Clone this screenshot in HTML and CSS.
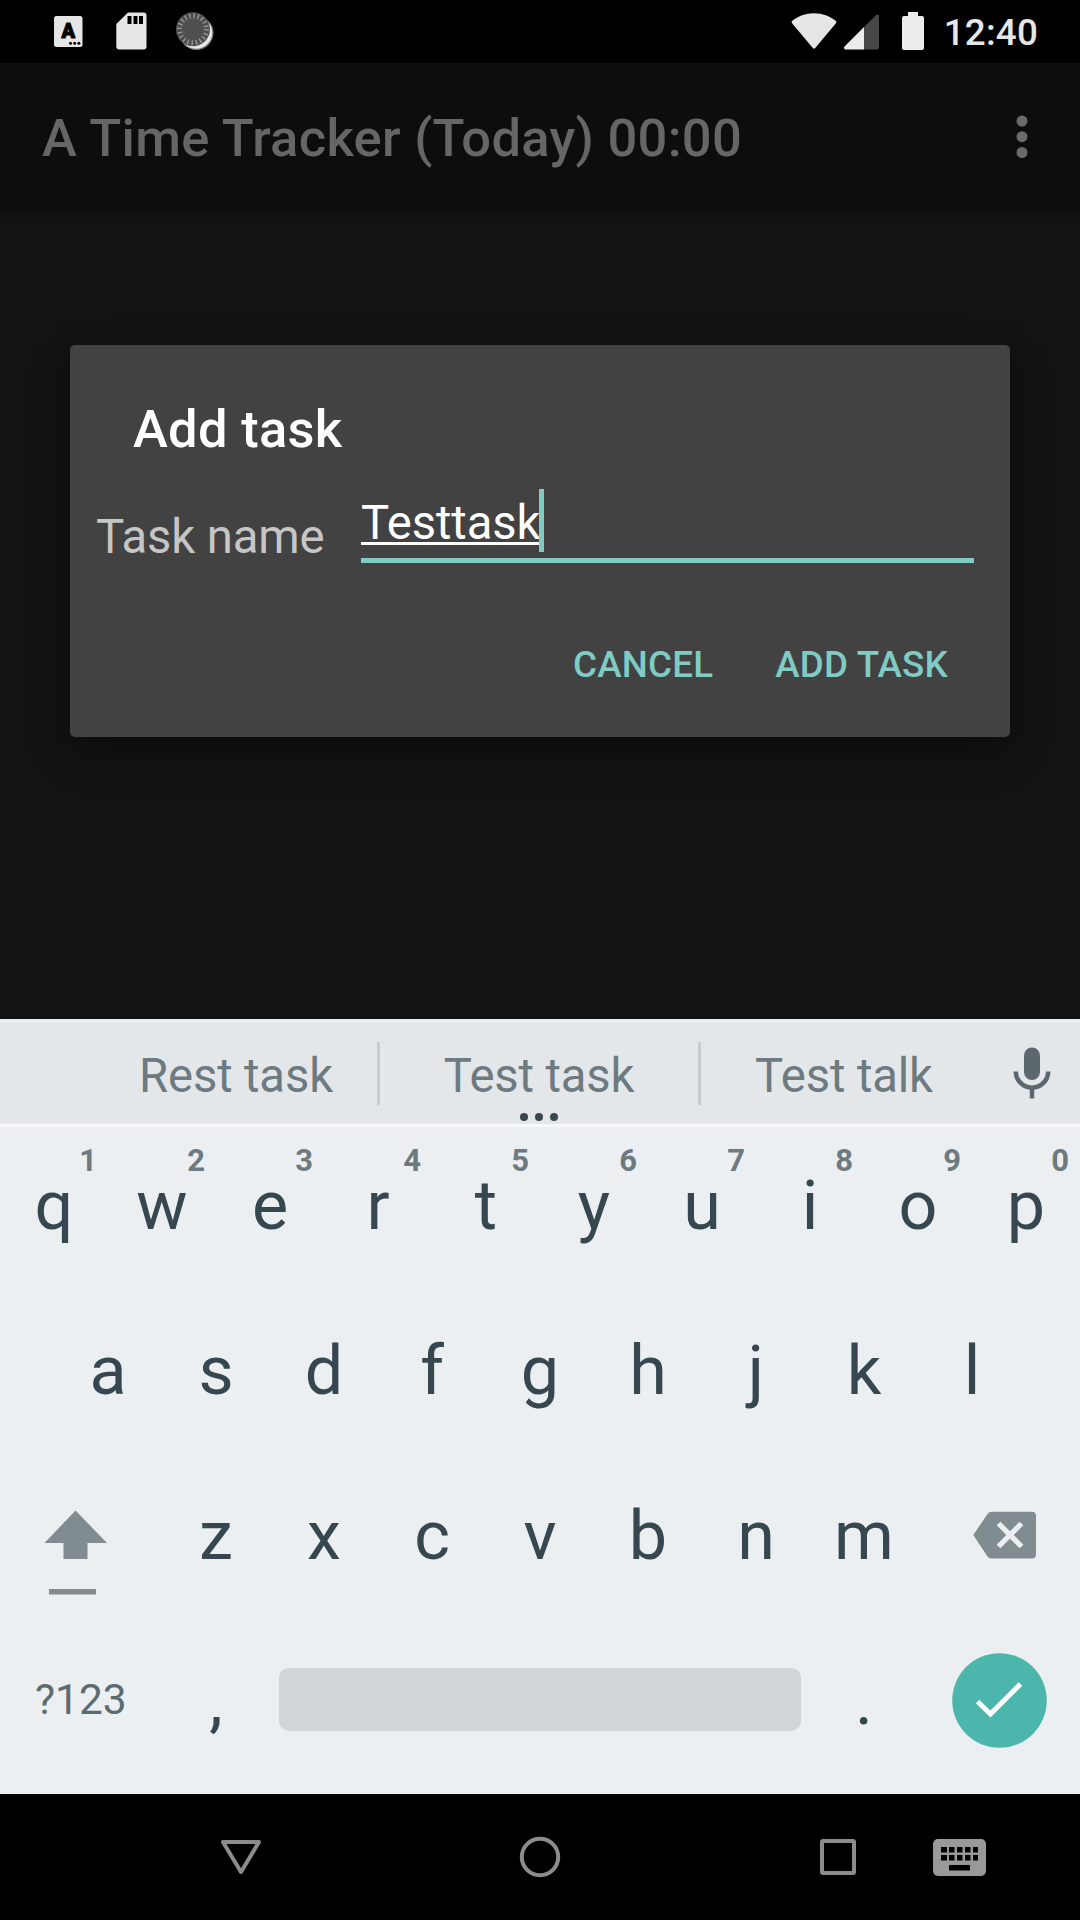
FILE: index.html
```html
<!DOCTYPE html>
<html lang="en">
<head>
<meta charset="utf-8">
<title>A Time Tracker</title>
<link rel="stylesheet" href="styles.css">
</head>
<body>
<div class="phone">
  <header class="status">
    <svg class="st-lang" width="29" height="31" viewBox="0 0 29 31"><rect width="28.5" height="31" rx="2.5" fill="#e6e6e6"/><text class="lang-letter" x="14.2" y="22" text-anchor="middle">A</text><g fill="#000"><circle cx="16.5" cy="27.3" r="1.5"/><circle cx="20.7" cy="27.3" r="1.5"/><circle cx="24.9" cy="27.3" r="1.5"/></g></svg>
    <svg class="st-sd" width="31" height="38" viewBox="0 0 31 38"><path fill="#e6e6e6" d="M12 0.5H27.5a3 3 0 0 1 3 3V34.500a3 3 0 0 1-3 3H3.300a3 3 0 0 1-3-3V12Z"/><path d="M11.500 4h4v8h-4zM17.500 4h4v8h-4zM23 4h4v8h-4z"/></svg>
    <svg class="st-sync" width="38" height="38" viewBox="0 0 38 38"><circle cx="20.500" cy="21" r="17" fill="#777"/><circle cx="20" cy="20.500" r="16.200" fill="#e8e8e8"/><circle cx="17" cy="17.300" r="17" fill="#4f4f4f"/><circle cx="17" cy="17.300" r="13.500" fill="none" stroke="#999" stroke-width="5" stroke-dasharray="1.300 2.941"/></svg>
    <span class="grow"></span>
    <svg class="st-wifi" width="46" height="37" viewBox="0 0 46 37"><path fill="#e6e6e6" d="M.5 8.500C13-2.500 33-2.500 45.500 8.500Q45 10.500 43.500 12L24.200 35Q23 36.500 21.800 35L2.500 12Q1 10.500 .5 8.500Z"/></svg>
    <svg class="st-cell" width="35" height="36" viewBox="0 0 35 36"><path fill="#474747" d="M20 13 32 1.300Q33 0 35 1V33a2.500 2.500 0 0 1-2.500 2.500H20z"/><path fill="#ececec" d="M20 13V35.500H1.500Q-1 34.500 .5 32.500Z"/></svg>
    <svg class="st-bat" width="22" height="38" viewBox="0 0 22 38"><path fill="#ececec" d="M6 0h10v4h4a2 2 0 0 1 2 2v30a2 2 0 0 1-2 2H2a2 2 0 0 1-2-2V6a2 2 0 0 1 2-2h4z"/></svg>
    <span class="clock">12:40</span>
  </header>

  <div class="appbar">
    <h1>A Time Tracker (Today) 00:00</h1>
    <svg class="more" width="12" height="44" viewBox="0 0 12 44"><g fill="#6b6b6b"><circle cx="6" cy="6" r="5.500"/><circle cx="6" cy="21.700" r="5.500"/><circle cx="6" cy="37.500" r="5.500"/></g></svg>
  </div>

  <main class="content">
    <section class="dialog">
      <h2>Add task</h2>
      <div class="form">
        <span class="label">Task name</span>
        <div class="field"><span class="value">Testtask</span><span class="caret"></span></div>
      </div>
      <div class="actions"><span>CANCEL</span><span>ADD TASK</span></div>
    </section>
  </main>

  <section class="keyboard">
    <div class="suggest">
      <span class="word">Rest task</span>
      <span class="word mid">Test task<i class="dots"><b></b><b></b><b></b></i></span>
      <span class="word">Test talk</span>
      <svg class="mic" width="38" height="52" viewBox="0 0 38 52"><rect x="11" y=".5" width="16" height="32.500" rx="8" fill="#5c686e"/><path fill="none" stroke="#5c686e" stroke-width="4.500" d="M2.800 24.500a16.200 16.200 0 0 0 32.400 0M19 40.500V51.500"/></svg>
    </div>
    <div class="row">
      <span class="key">q<sup>1</sup></span><span class="key">w<sup>2</sup></span><span class="key">e<sup>3</sup></span><span class="key">r<sup>4</sup></span><span class="key">t<sup>5</sup></span><span class="key">y<sup>6</sup></span><span class="key">u<sup>7</sup></span><span class="key">i<sup>8</sup></span><span class="key">o<sup>9</sup></span><span class="key">p<sup>0</sup></span>
    </div>
    <div class="row">
      <span class="key">a</span><span class="key">s</span><span class="key">d</span><span class="key">f</span><span class="key">g</span><span class="key">h</span><span class="key">j</span><span class="key">k</span><span class="key">l</span>
    </div>
    <div class="row">
      <span class="wide shift"><svg width="64" height="86" viewBox="0 0 64 86"><path fill="#818c90" d="M31.500 .5 63 33H43.500V49H19.500V33H.5ZM5 79h47v5.500H5z"/></svg></span>
      <span class="key">z</span><span class="key">x</span><span class="key">c</span><span class="key">v</span><span class="key">b</span><span class="key">n</span><span class="key">m</span>
      <span class="wide back"><svg width="64" height="48" viewBox="0 0 64 48"><path fill="#818c90" d="M18.500 .8H59a4 4 0 0 1 4 4V43.500a4 4 0 0 1-4 4H18.500Q16 47.500 14.500 45.500L.3 24 14.500 3Q16 .8 18.500 .8Z"/><path stroke="#ebeff2" stroke-width="5.300" d="M25.500 12.500 48.500 35.500M48.500 12.500 25.500 35.500"/></svg></span>
    </div>
    <div class="row">
      <span class="wide sym">?123</span>
      <span class="key">,</span>
      <span class="space"></span>
      <span class="key">.</span>
      <span class="wide enter"><svg width="95" height="95" viewBox="0 0 95 95"><circle cx="47.500" cy="47.500" r="47.300" fill="#4db6ac"/><path fill="none" stroke="#fff" stroke-width="5" d="M25.500 48.500 38.500 61 68.500 31"/></svg></span>
    </div>
  </section>

  <nav class="nav">
    <svg class="nav-back" width="42" height="36" viewBox="0 0 42 36"><path fill="none" stroke="#8c8c8c" stroke-width="4" stroke-linejoin="round" d="M3 3H39L21 33Z"/></svg>
    <svg class="nav-home" width="42" height="42" viewBox="0 0 42 42"><circle cx="21" cy="21" r="18.200" fill="none" stroke="#8c8c8c" stroke-width="4"/></svg>
    <svg class="nav-recent" width="36" height="36" viewBox="0 0 36 36"><rect x="2" y="2" width="32" height="32" rx="1" fill="none" stroke="#8c8c8c" stroke-width="4"/></svg>
    <svg class="nav-kbd" width="53" height="37" viewBox="0 0 53 37"><rect width="53" height="37" rx="5" fill="#999"/><path d="M8 8h6v5.500H8zm8 0h5.500v5.500H16zm8 0h5.500v5.500H24zm8 0h5.500v5.500H32zm8 0h5v5.500h-5zM8 16h6v5.500H8zm8 0h5.500v5.500H16zm8 0h5.500v5.500H24zm8 0h5.500v5.500H32zm8 0h5v5.500h-5zM16 26h21v5.500H16z"/></svg>
  </nav>
</div>
</body>
</html>
```
FILE: styles.css
```css
* { box-sizing: border-box; }
body { margin: 0; background: #000; font-family: Roboto, sans-serif; }
svg { display: block; flex: none; }
h1, h2 { margin: 0; font-weight: 500; font-size: 52.5px; letter-spacing: .29px; white-space: nowrap; }
.phone { width: 1080px; height: 1920px; display: flex; flex-direction: column; overflow: hidden; }

.status { height: 63px; display: flex; align-items: flex-start; padding: 12px 42px 0 54px; background: #000; }
.grow { flex: 1; }
.lang-letter { font: 900 20px Roboto, sans-serif; stroke: #000; stroke-width: 1; stroke-linejoin: round; }
.st-lang { margin-top: 4px; }
.st-sd { margin-left: 33px; }
.st-sync { margin-left: 29px; }
.st-wifi { margin-top: 1px; }
.st-cell { margin: 2px 23px 0 7px; }
.clock { margin-left: 20px; color: #e6e6e6; font-size: 36.75px; font-weight: 500; line-height: 42px; letter-spacing: .2px; }

.appbar { height: 147px; display: flex; align-items: center; justify-content: space-between; padding: 0 52px 0 42px; background: #0d0d0d; color: #666; z-index: 1; box-shadow: 0 2px 8px rgba(0,0,0,.35); }
.appbar h1 { padding-top: 3px; }

.content { height: 809px; padding: 135px 70px 0; background: #131313; }
.dialog { height: 392px; border-radius: 5px; background: #424242; color: #fff; box-shadow: 0 16px 40px rgba(0,0,0,.3), 0 0 14px rgba(0,0,0,.15); }
.dialog h2 { padding: 53px 0 0 63px; line-height: 62px; }
.form { display: flex; height: 103px; margin-top: 29px; padding: 0 36px 0 26px; font-size: 47.25px; letter-spacing: -.12px; }
.label { width: 265px; margin-top: 20px; line-height: 56px; color: #c6c6c6; }
.field { flex: 1; display: flex; height: 74px; border-bottom: 5px solid #80cbc4; }
.value { height: 50px; margin: 6px -1px 0 0; line-height: 57px; border-bottom: 3px solid #fff; }
.caret { width: 5px; height: 63px; background: #80cbc4; }
.actions { display: flex; justify-content: flex-end; gap: 62px; padding: 51px 62px 0 0; color: #80cbc4; font-size: 36.75px; font-weight: 500; line-height: 44px; letter-spacing: .2px; }

.keyboard { height: 775px; background: #ebeff2; }
.suggest { height: 108px; display: flex; align-items: center; padding-left: 93px; background: #e3e7ea; border-top: 3px solid #eceff1; border-bottom: 3px solid #f5f7f8; color: #6d7a80; font-size: 47.25px; letter-spacing: -.15px; }
.word { width: 286px; height: 63px; display: flex; justify-content: center; margin-top: 1px; line-height: 68px; }
.word.mid { position: relative; width: 324px; margin-left: -2px; border: solid #c9cdd0; border-width: 0 3px; }
.dots { position: absolute; left: 0; right: 0; top: 71px; display: flex; justify-content: center; gap: 7px; }
.dots b { width: 8px; height: 8px; border-radius: 50%; background: #37474f; }
.mic { margin-left: 26px; }
.row { height: 165px; display: flex; justify-content: center; color: #37474f; font-size: 68.250px; line-height: 158px; }
.key { position: relative; width: 108px; text-align: center; }
.key sup { position: absolute; right: 11px; top: 0; font-size: 31px; font-weight: 700; line-height: 68px; color: #6d7a80; }
.wide { width: 162px; }
.shift { padding: 53px 0 0 44px; }
.back { padding: 54px 0 0 55px; }
.sym { padding-left: 35px; font-size: 42.500px; line-height: 156px; color: #5c6b70; }
.space { width: 522px; height: 63px; margin: 46px 9px 0; border-radius: 10px; background: #d0d5d8; }
.enter { padding: 31px 0 0 34px; }

.nav { height: 126px; display: flex; align-items: center; padding: 0 94px 0 220px; background: #000; }
.nav-home { margin-left: 257px; }
.nav-recent { margin-left: 259px; }
.nav-kbd { margin-left: auto; }
```
